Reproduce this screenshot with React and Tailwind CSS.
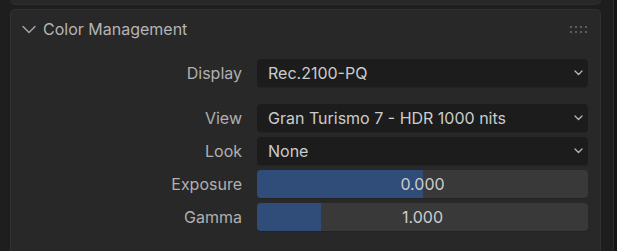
import React from "react";

const font = { fontFamily: "Inter, 'Noto Sans', sans-serif" };

function Chevron() {
  return (
    <svg width="9" height="6" viewBox="0 0 9 6" fill="none">
      <path d="M1 1l3.5 3.5L8 1" stroke="#b8b8b8" strokeWidth="1.3" strokeLinecap="round" strokeLinejoin="round" />
    </svg>
  );
}

function Dropdown({ label, value }) {
  return (
    <div className="flex items-center h-[28px]">
      <div className="w-[246px] pr-[15px] text-right text-[#b0b0b0]">{label}</div>
      <div className="flex-1 h-full rounded-[4px] bg-[#1c1c1c] flex items-center pl-[11px] pr-[5px] text-[#cccccc] shadow-[0_1px_0_#232323]">
        <span className="flex-1">{value}</span>
        <Chevron />
      </div>
    </div>
  );
}

function Slider({ label, value, pct }) {
  return (
    <div className="flex items-center h-[28px]">
      <div className="w-[246px] pr-[15px] text-right text-[#b0b0b0]">{label}</div>
      <div className="flex-1 h-full rounded-[4px] bg-[#393939] relative overflow-hidden shadow-[0_1px_0_#232323]">
        <div className="absolute left-0 top-0 bottom-0 bg-[#304c78]" style={{ width: pct }} />
        <div className="relative h-full flex items-center justify-center text-[#cccccc]">{value}</div>
      </div>
    </div>
  );
}

export default function App() {
  return (
    <div className="w-[617px] h-[251px] bg-[#1e1e1e] flex overflow-hidden text-[16px]" style={font}>
      <div className="w-[601px] pl-[10px] flex flex-col">
        <div className="h-[5px] bg-[#282828] rounded-b-[5px] border-x border-b border-[#2e2e2e]" />
        <div className="mt-[4px] flex-1 bg-[#282828] rounded-t-[5px] border-x border-t border-[#303030]">
          <div className="h-[38px] flex items-center pl-[11px] pr-[12px]">
            <svg width="14" height="9" viewBox="0 0 14 9" fill="none">
              <path d="M1 1.5l6 6 6-6" stroke="#a8a8a8" strokeWidth="1.4" strokeLinecap="round" strokeLinejoin="round" />
            </svg>
            <span className="ml-[7px] text-[16px] text-[#b5b5b5] flex-1">Color Management</span>
            <div className="grid grid-cols-4 gap-x-[3px] gap-y-[3px] mr-[1px]">
              {Array.from({ length: 8 }).map((_, i) => (
                <div key={i} className="w-[2px] h-[2px] bg-[#5e5e5e]" />
              ))}
            </div>
          </div>
          <div className="pr-[12px] pt-[11px]">
            <Dropdown label="Display" value="Rec.2100-PQ" />
            <div className="h-[17px]" />
            <div className="flex flex-col gap-[5px]">
              <Dropdown label="View" value="Gran Turismo 7 - HDR 1000 nits" />
              <Dropdown label="Look" value="None" />
              <Slider label="Exposure" value="0.000" pct="50%" />
              <Slider label="Gamma" value="1.000" pct="19.4%" />
            </div>
          </div>
        </div>
      </div>
      <div className="w-[12px] bg-[#1e1e1e]" />
      <div className="w-[1px] bg-[#2c2c2c]" />
      <div className="flex-1 bg-[#141414]" />
    </div>
  );
}
